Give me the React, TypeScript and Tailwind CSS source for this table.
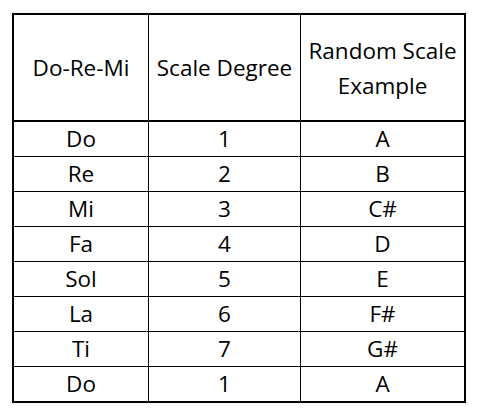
import React from "react";

const rows: [string, string, string][] = [
  ["Do", "1", "A"],
  ["Re", "2", "B"],
  ["Mi", "3", "C#"],
  ["Fa", "4", "D"],
  ["Sol", "5", "E"],
  ["La", "6", "F#"],
  ["Ti", "7", "G#"],
  ["Do", "1", "A"],
];

export default function App() {
  return (
    <div className="w-[477px] h-[413px] bg-white pl-[12px] pt-[13px] text-black" style={{ fontFamily: "'Open Sans', sans-serif" }}>
      <div className="w-[454px] border-2 border-black text-[22.5px]">
        <div className="flex h-[107px] border-b-2 border-black">
          <div className="w-[135px] border-r border-black flex items-center justify-center">Do-Re-Mi</div>
          <div className="w-[152px] border-r border-black flex items-center justify-center">Scale Degree</div>
          <div className="flex-1 flex flex-col items-center justify-center leading-[35px] text-center">
            <span>Random Scale</span>
            <span>Example</span>
          </div>
        </div>
        {rows.map((r, i) => (
          <div
            key={i}
            className={i < rows.length - 1 ? "flex h-[35px] border-b border-black" : "flex h-[34px]"}
          >
            <div className="w-[135px] border-r border-black flex items-center justify-center">{r[0]}</div>
            <div className="w-[152px] border-r border-black flex items-center justify-center">{r[1]}</div>
            <div className="flex-1 flex items-center justify-center">{r[2]}</div>
          </div>
        ))}
      </div>
    </div>
  );
}
